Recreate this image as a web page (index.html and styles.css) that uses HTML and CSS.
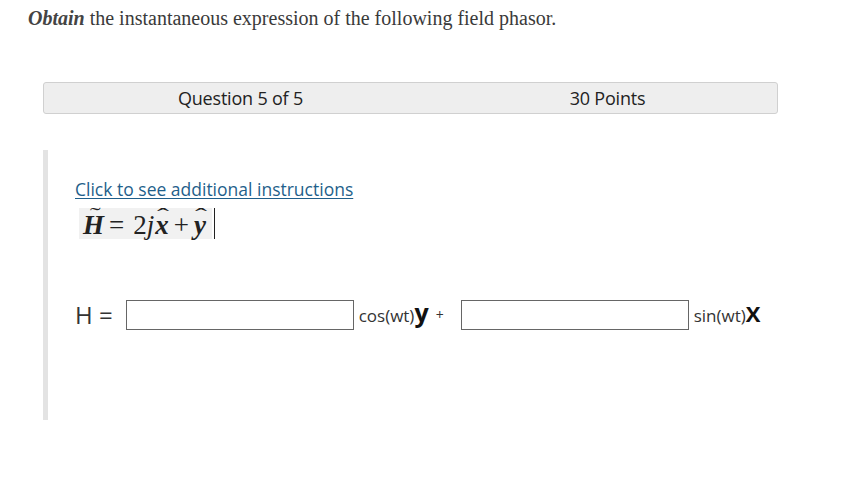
FILE: index.html
```html
<!DOCTYPE html>
<html>
<head>
<meta charset="utf-8">
<link rel="stylesheet" href="styles.css">
</head>
<body>
<div class="page">
  <p class="prompt"><b><i>Obtain</i></b> the instantaneous expression of the following field phasor.</p>
  <div class="qhead">
    <div class="qcol">Question 5 of 5</div>
    <div class="qcol">30 Points</div>
  </div>
  <div class="qbody">
    <a class="instr" href="#">Click to see additional instructions</a>
    <div class="formula-row">
      <span class="formula"><span class="acc"><b><i>H</i></b><span class="tilde">&#732;</span></span><span class="op op-eq">=</span>2<i>j</i><span class="acc acc-x"><b><i>x</i></b><span class="hat">&#710;</span></span><span class="op">+</span><span class="acc"><b><i>y</i></b><span class="hat">&#710;</span></span></span><span class="cursor"></span>
    </div>
    <div class="eqrow">
      <span class="hlabel">H =</span>
      <span class="field"></span>
      <span class="term">cos(wt)<b class="unit">y</b></span>
      <span class="plus">+</span>
      <span class="field"></span>
      <span class="term">sin(wt)<b class="unit unit-x">X</b></span>
    </div>
  </div>
</div>
</body>
</html>
```

FILE: styles.css
```css
html, body {
  margin: 0;
  padding: 0;
  background: #ffffff;
}

.page {
  padding: 7px 0 0 0;
  width: 851px;
  height: 483px;
  box-sizing: border-box;
  font-family: "Open Sans", "Liberation Sans", sans-serif;
  color: #333333;
}

.prompt {
  margin: 0 0 0 28px;
  font-family: "Liberation Serif", serif;
  font-size: 20px;
  line-height: 23px;
  color: #3a3a3a;
}

.prompt b {
  color: #444;
}

.qhead {
  margin: 52px 0 0 43px;
  width: 735px;
  height: 32px;
  box-sizing: border-box;
  background: #eeeeee;
  border: 1px solid #d0d0d0;
  border-radius: 3px;
  display: grid;
  grid-template-columns: 367px 367px;
  padding-left: 13px;
  align-items: center;
  font-size: 18px;
  color: #222222;
  letter-spacing: -0.2px;
}

.qcol {
  text-align: center;
  white-space: nowrap;
}

.qbody {
  margin: 36px 0 0 43px;
  height: 270px;
  box-sizing: border-box;
  border-left: 5px solid #e3e3e3;
  padding: 27px 0 0 27px;
  display: flex;
  flex-direction: column;
  align-items: flex-start;
}

.instr {
  font-size: 17.5px;
  line-height: 24px;
  color: #1f5f8b;
  text-decoration: underline;
  text-underline-offset: 2px;
}

.formula-row {
  margin-top: 7px;
  margin-left: 4px;
  display: flex;
  align-items: stretch;
}

.formula {
  background: #f1f1f1;
  height: 31px;
  padding: 0 0 0 4px;
  width: 133px;
  box-sizing: border-box;
  font-family: "Liberation Serif", serif;
  font-size: 27px;
  line-height: 34px;
  color: #222;
  white-space: nowrap;
}

.op {
  margin: 0 5px;
}

.op-eq {
  margin: 0 9px 0 5px;
}

.acc {
  position: relative;
  display: inline-block;
}

.acc-x {
  margin-left: 1px;
}

.tilde,
.hat {
  position: absolute;
  left: 50%;
  font-size: 20px;
  line-height: 20px;
  font-weight: normal;
}

.tilde {
  top: -3px;
  transform: translateX(-30%) scaleX(1.6);
}

.hat {
  top: -2px;
  transform: translateX(-35%) scaleX(1.8);
}

.cursor {
  width: 1px;
  background: #222;
  margin-left: 2px;
}

.eqrow {
  margin-top: 59px;
  display: flex;
  align-items: center;
  white-space: nowrap;
}

.hlabel {
  font-size: 24px;
  color: #333;
  margin-right: 13px;
}

.field {
  width: 228px;
  height: 30px;
  box-sizing: border-box;
  border: 1px solid #666;
  background: #fff;
}

.term {
  font-size: 17px;
  color: #333;
  margin-left: 5px;
}

.unit {
  font-size: 25px;
  font-weight: 700;
  color: #111;
  line-height: 20px;
}

.unit-x {
  font-size: 22px;
}

.plus {
  font-size: 14px;
  margin: 0 17px 0 7px;
}
```
